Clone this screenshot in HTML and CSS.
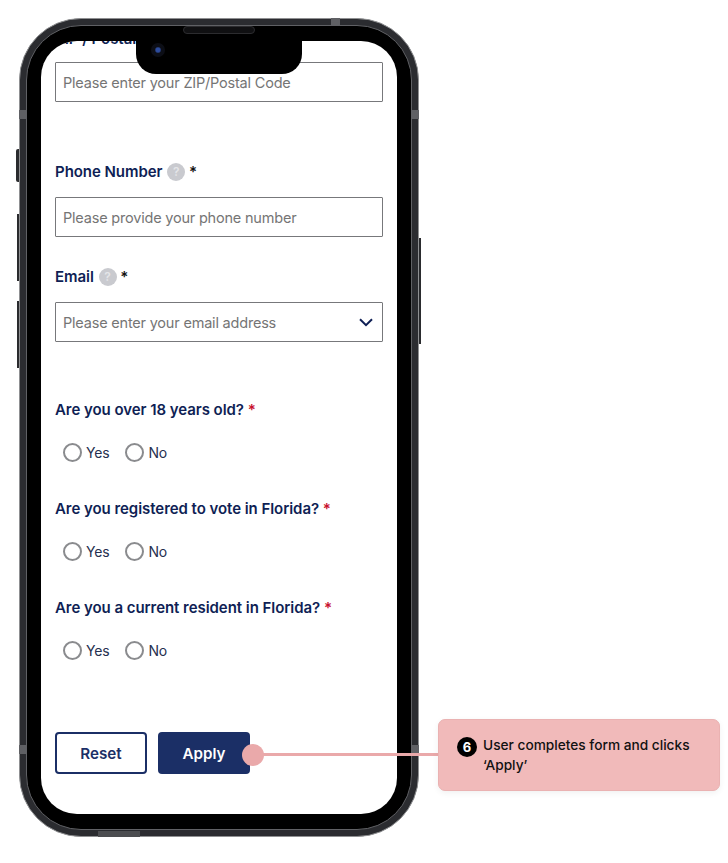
FILE: index.html
```html
<!DOCTYPE html>
<html lang="en">
<head>
    <meta charset="UTF-8">
    <meta name="viewport" content="width=device-width, initial-scale=1.0">
    <title>Voter Registration Form</title>
    <link rel="stylesheet" href="styles.css">
</head>
<body>
    <div class="phone">
        <span class="side-btn side-mute"></span>
        <span class="side-btn side-up"></span>
        <span class="side-btn side-down"></span>
        <span class="side-btn side-power"></span>
        <span class="band band-top"></span>
        <span class="band band-left-a"></span>
        <span class="band band-left-b"></span>
        <span class="band band-right-a"></span>
        <span class="band band-right-b"></span>
        <span class="band band-bottom"></span>
        <div class="bezel">
            <span class="speaker"></span>
            <div class="notch"><span class="camera"></span></div>
            <div class="screen">
                <form class="form">
                    <div class="field">
                        <label class="label">ZIP / Postal Code</label>
                        <input class="text-input" type="text" placeholder="Please enter your ZIP/Postal Code">
                    </div>
                    <div class="field field-phone">
                        <label class="label">Phone Number <span class="help">?</span> <span class="req">*</span></label>
                        <input class="text-input" type="text" placeholder="Please provide your phone number">
                    </div>
                    <div class="field field-email">
                        <label class="label">Email <span class="help">?</span> <span class="req">*</span></label>
                        <div class="select-wrap">
                            <input class="text-input" type="text" placeholder="Please enter your email address">
                            <svg class="chevron" width="14" height="9" viewBox="0 0 14 9"><path d="M1 1.2l6 6 6-6" fill="none" stroke="#0f1f55" stroke-width="2"/></svg>
                        </div>
                    </div>
                    <div class="question question-first">
                        <div class="label">Are you over 18 years old? <span class="req-red">*</span></div>
                        <div class="radios">
                            <label class="radio"><input type="radio" name="age">Yes</label>
                            <label class="radio"><input type="radio" name="age">No</label>
                        </div>
                    </div>
                    <div class="question">
                        <div class="label">Are you registered to vote in Florida? <span class="req-red">*</span></div>
                        <div class="radios">
                            <label class="radio"><input type="radio" name="reg">Yes</label>
                            <label class="radio"><input type="radio" name="reg">No</label>
                        </div>
                    </div>
                    <div class="question">
                        <div class="label">Are you a current resident in Florida? <span class="req-red">*</span></div>
                        <div class="radios">
                            <label class="radio"><input type="radio" name="res">Yes</label>
                            <label class="radio"><input type="radio" name="res">No</label>
                        </div>
                    </div>
                    <div class="actions">
                        <button class="btn btn-reset" type="button">Reset</button>
                        <button class="btn btn-apply" type="button">Apply</button>
                    </div>
                </form>
            </div>
        </div>
    </div>

    <span class="connector"></span>
    <span class="connector-dot"></span>
    <div class="callout">
        <span class="callout-num">6</span>
        <p class="callout-text">User completes form and clicks ‘Apply’</p>
    </div>
</body>
</html>
```

FILE: styles.css
```css
* {
    box-sizing: border-box;
}

body {
    margin: 0;
    padding: 18px 0 0 19px;
    background-color: #fff;
    font-family: Inter, "Liberation Sans", sans-serif;
}

/* phone frame */
.phone {
    position: relative;
    width: 400px;
    height: 819px;
    padding: 6px;
    border: 1px solid #8f9092;
    border-radius: 62px;
    background-color: #2b2c30;
}

.side-btn {
    position: absolute;
    background-color: #2a2b2e;
}

.side-mute {
    left: -4px;
    top: 130px;
    width: 3px;
    height: 33px;
    border-radius: 2px 0 0 2px;
}

.side-up {
    left: -3px;
    top: 195px;
    width: 2px;
    height: 67px;
}

.side-down {
    left: -3px;
    top: 282px;
    width: 2px;
    height: 67px;
}

.side-power {
    right: -3px;
    top: 219px;
    width: 2px;
    height: 106px;
}

.band {
    position: absolute;
    background-color: #5f6064;
}

.band-top {
    left: 311px;
    top: -1px;
    width: 9px;
    height: 7px;
}

.band-left-a {
    left: -1px;
    top: 91px;
    width: 7px;
    height: 9px;
}

.band-left-b {
    left: -1px;
    top: 726px;
    width: 7px;
    height: 9px;
}

.band-right-a {
    right: -1px;
    top: 91px;
    width: 7px;
    height: 9px;
}

.band-right-b {
    right: -1px;
    top: 726px;
    width: 7px;
    height: 9px;
}

.band-bottom {
    left: 78px;
    bottom: -1px;
    width: 42px;
    height: 6px;
    background-color: #4c4d50;
}

.bezel {
    position: relative;
    height: 100%;
    padding: 15px 14px;
    border: 1px solid #606165;
    border-radius: 55px;
    background-color: #000;
}

.speaker {
    position: absolute;
    left: 156px;
    top: 0;
    width: 72px;
    height: 8px;
    border: 1px solid #2c2c2f;
    border-radius: 4px;
    background-color: #101012;
    z-index: 2;
}

.notch {
    position: absolute;
    left: 109px;
    top: 14px;
    width: 166px;
    height: 34px;
    border-radius: 0 0 20px 20px;
    background-color: #000;
    z-index: 1;
}

.camera {
    position: absolute;
    left: 15px;
    top: 3px;
    width: 14px;
    height: 14px;
    border-radius: 50%;
    background: radial-gradient(circle, #2d4c9e 0, #2d4c9e 2px, #0c0e16 3.5px);
}

.screen {
    height: 100%;
    overflow: hidden;
    border-radius: 36px;
    background-color: #fff;
}

/* form */
.form {
    margin-top: -14px;
    padding: 0 14px;
}

.label {
    display: block;
    height: 24px;
    font-size: 15px;
    font-weight: 600;
    letter-spacing: -0.05px;
    line-height: 24px;
    color: #0f1f55;
}

.field .text-input {
    margin-top: 11px;
}

.field-phone .text-input,
.field-email .text-input {
    margin-top: 13px;
}

.field-phone {
    margin-top: 58px;
}

.field-email {
    margin-top: 28px;
}

.text-input {
    display: block;
    width: 100%;
    height: 40px;
    padding: 0 7px;
    border: 1.5px solid #77787b;
    border-radius: 1px;
    font-family: inherit;
    font-size: 14.5px;
    letter-spacing: -0.2px;
    color: #333;
}

.text-input::placeholder {
    color: #757575;
    opacity: 1;
}

.select-wrap {
    position: relative;
}

.chevron {
    position: absolute;
    right: 10px;
    top: 16px;
}

.help {
    display: inline-block;
    width: 18px;
    height: 18px;
    margin-left: 1px;
    border-radius: 50%;
    background-color: #c9cacf;
    color: #e4e5e8;
    font-size: 12px;
    line-height: 18px;
    text-align: center;
    vertical-align: 1px;
}

.req {
    color: #111;
}

.req-red {
    color: #c8102e;
}

.question {
    margin-top: 33px;
}

.question-first {
    margin-top: 56px;
}

.radios {
    display: flex;
    gap: 16px;
    margin-top: 18px;
    padding-left: 8px;
}

.radio {
    display: flex;
    align-items: center;
    gap: 4px;
    height: 24px;
    font-size: 14px;
    letter-spacing: -0.2px;
    color: #26304f;
}

.radio input {
    appearance: none;
    width: 19px;
    height: 19px;
    margin: 0;
    border: 2px solid #8a8b8e;
    border-radius: 50%;
    background-color: #fff;
}

.actions {
    display: flex;
    gap: 11px;
    margin-top: 70px;
}

.btn {
    width: 92px;
    height: 42px;
    border-radius: 4px;
    font-family: inherit;
    font-size: 15.2px;
    font-weight: 600;
}

.btn-reset {
    border: 2px solid #1b2f66;
    background-color: #fff;
    color: #1b2f66;
}

.btn-apply {
    border: none;
    background-color: #1b2f66;
    color: #fff;
}

/* annotation */
.connector {
    position: absolute;
    left: 253px;
    top: 753px;
    width: 186px;
    height: 3px;
    background-color: #eaa9aa;
}

.connector-dot {
    position: absolute;
    left: 242px;
    top: 744px;
    width: 22px;
    height: 22px;
    border-radius: 50%;
    background-color: #eaa9aa;
}

.callout {
    position: absolute;
    left: 438px;
    top: 719px;
    display: flex;
    gap: 6px;
    width: 282px;
    height: 72px;
    padding: 15px 18px;
    border: 1px solid #eab2b2;
    border-radius: 7px;
    background-color: #f1baba;
    box-shadow: 0 2px 6px rgba(0, 0, 0, 0.06);
}

.callout-num {
    flex: none;
    width: 20px;
    height: 20px;
    margin-top: 2px;
    border-radius: 50%;
    background-color: #000;
    color: #fff;
    font-size: 13px;
    font-weight: 700;
    line-height: 20px;
    text-align: center;
}

.callout-text {
    margin: 0;
    font-size: 13.7px;
    font-weight: 500;
    line-height: 20px;
    color: #111;
}
```
